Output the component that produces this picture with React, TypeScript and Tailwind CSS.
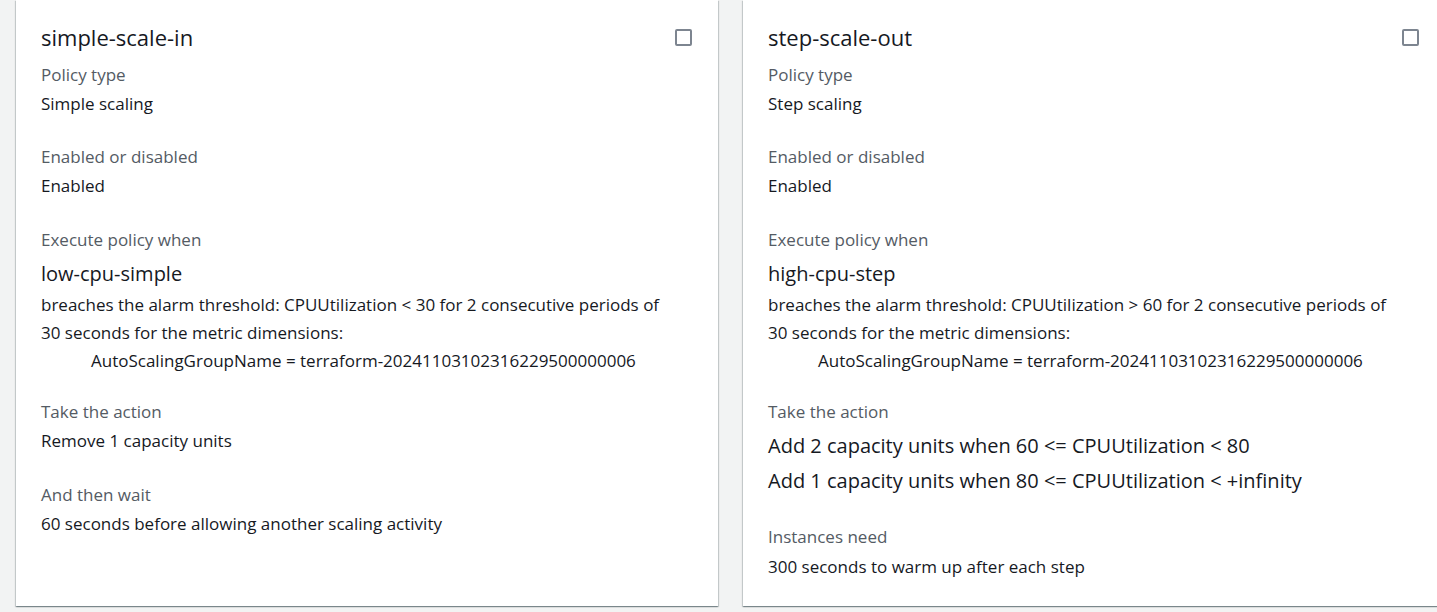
import React from "react";

const Label = ({ children }: { children: React.ReactNode }) => (
  <div className="text-[17px] leading-[22px] text-[#545b64]">{children}</div>
);

const Value = ({ children, mt = "mt-[7px]" }: { children: React.ReactNode; mt?: string }) => (
  <div className={`${mt} text-[17px] leading-[22px] text-[#16191f]`}>{children}</div>
);

const Alarm = ({ name, op, value }: { name: string; op: string; value: string }) => (
  <div className="mt-[10px] text-[#16191f]">
    <div className="text-[20px] leading-[26px]">{name}</div>
    <div className="mt-[4px] text-[17px] leading-[28px]">
      <div>
        breaches the alarm threshold: CPUUtilization {op} {value} for 2 consecutive periods of
      </div>
      <div>30 seconds for the metric dimensions:</div>
      <div className="pl-[50px]">AutoScalingGroupName = terraform-20241103102316229500000006</div>
    </div>
  </div>
);

const PolicyCard = ({ title, children }: { title: string; children: React.ReactNode }) => (
  <div className="relative h-[606px] w-[702px] shrink-0 bg-white pl-[25px] pr-[26px] pt-[23px] shadow-[0_1px_1px_0_rgba(0,28,36,0.3),1px_1px_1px_0_rgba(0,28,36,0.15),-1px_1px_1px_0_rgba(0,28,36,0.15)]">
    <div className="flex items-center justify-between">
      <div className="text-[22px] leading-[28px] text-[#16191f]">{title}</div>
      <div className="h-[17px] w-[17px] rounded-[2px] border-2 border-[#7d8590] bg-white" />
    </div>
    <div className="mt-[13px]">{children}</div>
  </div>
);

const Group = ({ children, gap = "mb-[31px]" }: { children: React.ReactNode; gap?: string }) => (
  <div className={gap}>{children}</div>
);

export default function App() {
  return (
    <div
      className="flex h-[612px] w-[1437px] gap-[25px] overflow-hidden bg-[#f2f3f3] pl-[16px]"
      style={{ fontFamily: "'Open Sans', 'Liberation Sans', sans-serif" }}
    >
      <PolicyCard title="simple-scale-in">
        <Group>
          <Label>Policy type</Label>
          <Value>Simple scaling</Value>
        </Group>
        <Group gap="mb-[32px]">
          <Label>Enabled or disabled</Label>
          <Value>Enabled</Value>
        </Group>
        <Group gap="mb-[26px]">
          <Label>Execute policy when</Label>
          <Alarm name="low-cpu-simple" op="<" value="30" />
        </Group>
        <Group gap="mb-[32px]">
          <Label>Take the action</Label>
          <Value>Remove 1 capacity units</Value>
        </Group>
        <Group>
          <Label>And then wait</Label>
          <Value>60 seconds before allowing another scaling activity</Value>
        </Group>
      </PolicyCard>
      <PolicyCard title="step-scale-out">
        <Group>
          <Label>Policy type</Label>
          <Value>Step scaling</Value>
        </Group>
        <Group gap="mb-[32px]">
          <Label>Enabled or disabled</Label>
          <Value>Enabled</Value>
        </Group>
        <Group gap="mb-[26px]">
          <Label>Execute policy when</Label>
          <Alarm name="high-cpu-step" op=">" value="60" />
        </Group>
        <Group gap="mb-[28px]">
          <Label>Take the action</Label>
          <div className="mt-[5px] text-[20px] leading-[35px] text-[#16191f]">
            <div>Add 2 capacity units when 60 &lt;= CPUUtilization &lt; 80</div>
            <div>Add 1 capacity units when 80 &lt;= CPUUtilization &lt; +infinity</div>
          </div>
        </Group>
        <Group>
          <Label>Instances need</Label>
          <Value mt="mt-[8px]">300 seconds to warm up after each step</Value>
        </Group>
      </PolicyCard>
    </div>
  );
}
